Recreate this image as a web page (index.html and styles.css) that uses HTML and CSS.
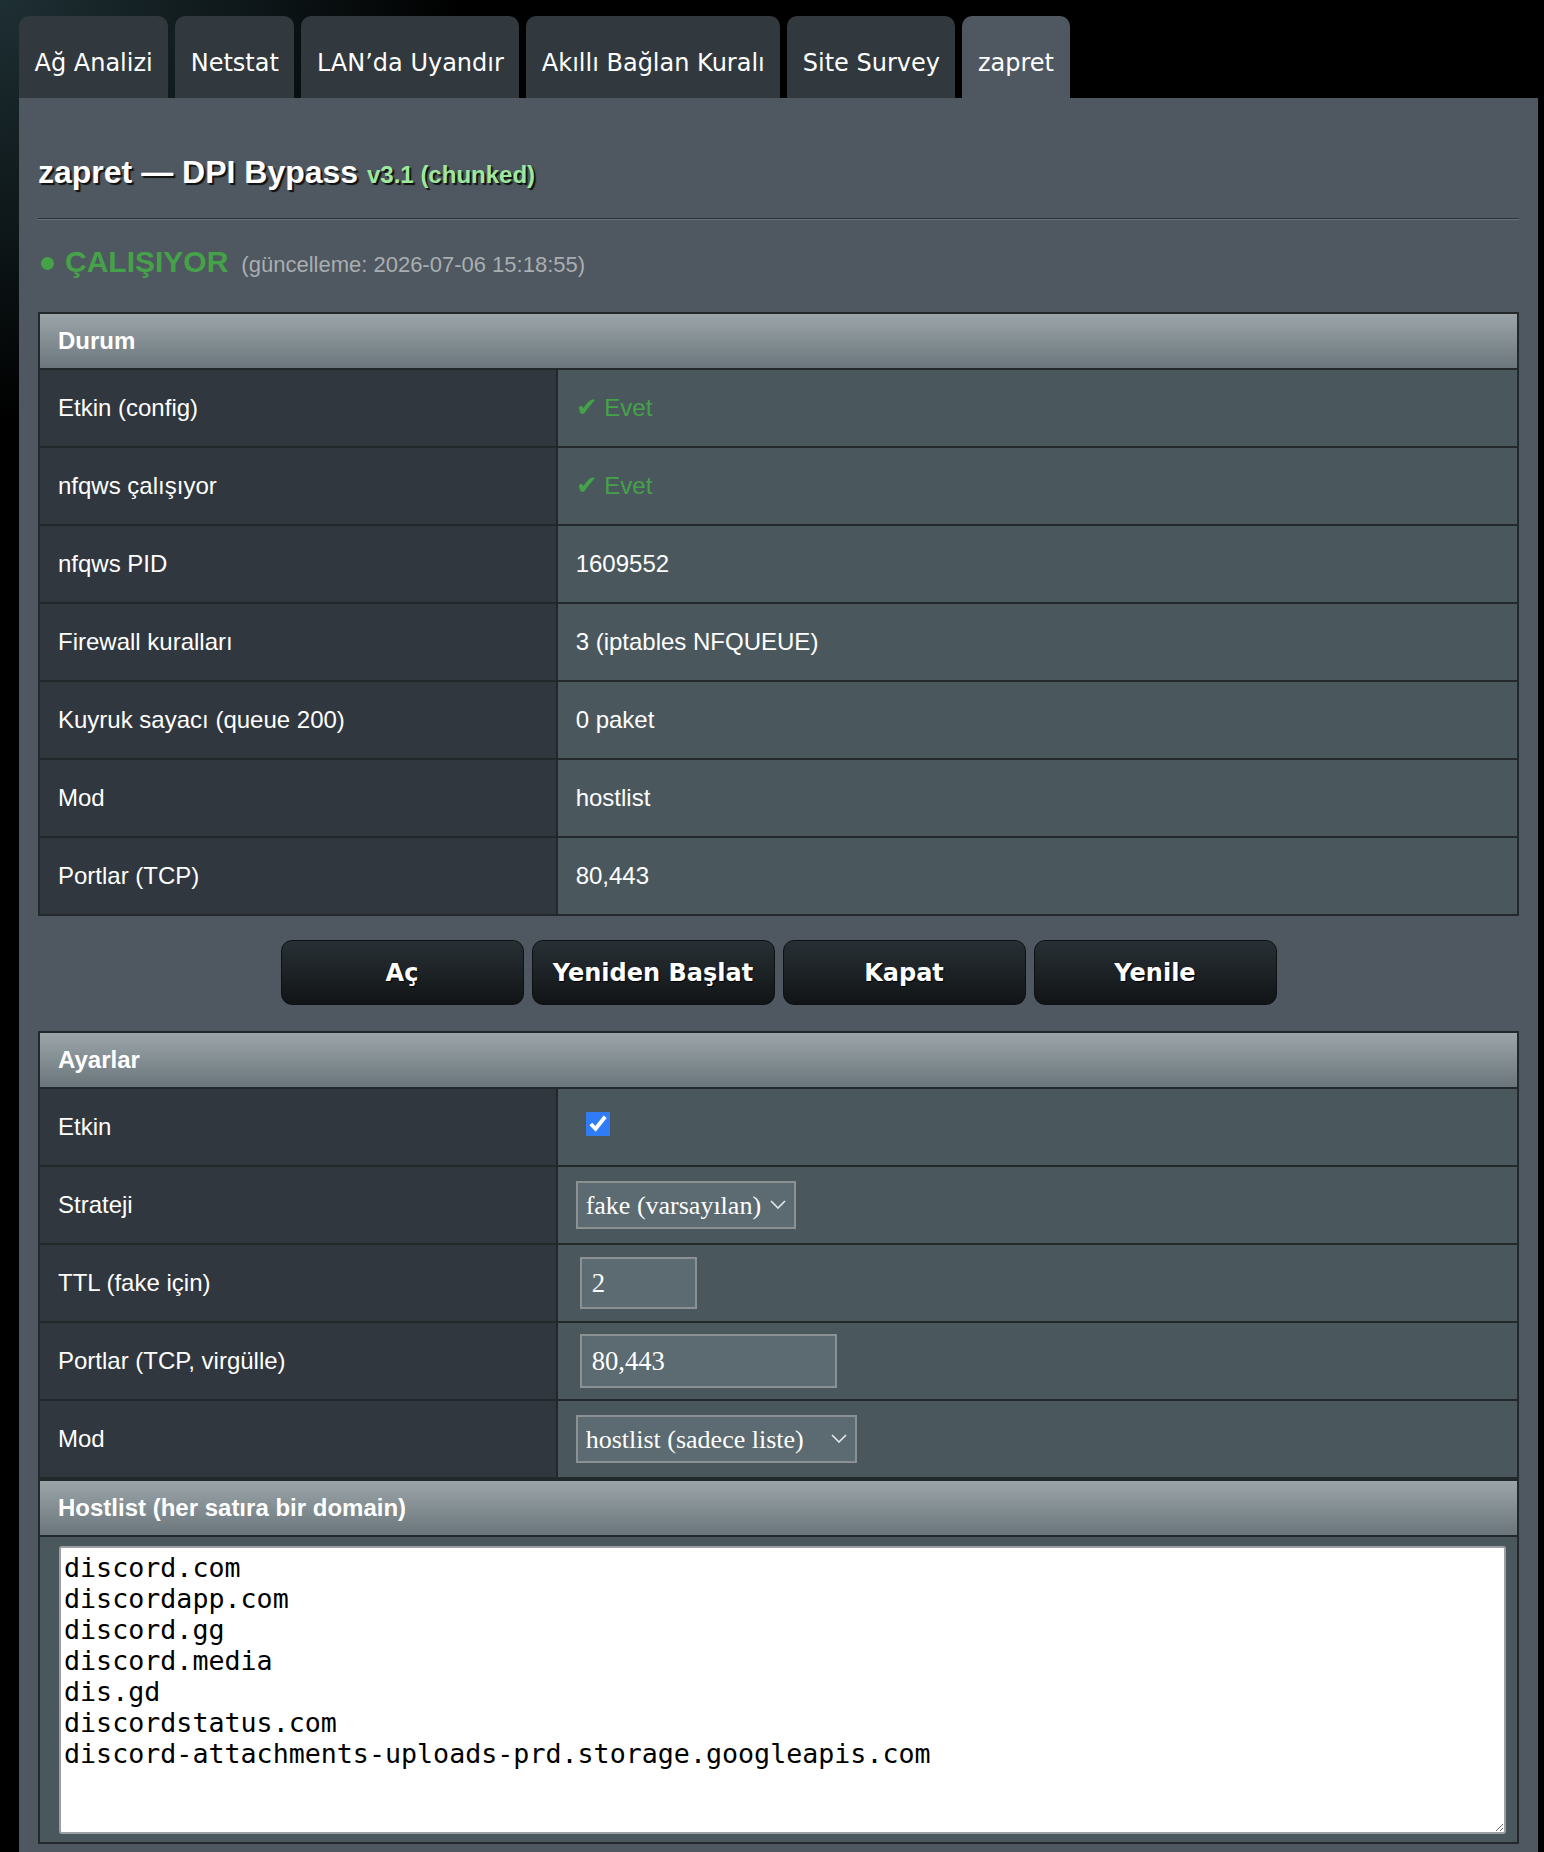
FILE: index.html
```html
<!DOCTYPE html>
<html lang="tr">
<head>
<meta charset="utf-8">
<title>zapret — DPI Bypass</title>
<link rel="stylesheet" href="styles.css">
</head>
<body>

<ul class="tabs">
  <li><a href="#">Ağ Analizi</a></li>
  <li><a href="#">Netstat</a></li>
  <li><a href="#">LAN’da Uyandır</a></li>
  <li><a href="#">Akıllı Bağlan Kuralı</a></li>
  <li><a href="#">Site Survey</a></li>
  <li class="active"><a href="#">zapret</a></li>
</ul>

<div class="panel">
  <h1>zapret — DPI Bypass <span class="ver">v3.1 (chunked)</span></h1>
  <hr>

  <div class="status">
    <span class="dot"></span><b>ÇALIŞIYOR</b><span class="updated">(güncelleme: 2026-07-06 15:18:55)</span>
  </div>

  <!-- servis durumu -->
  <table class="box">
    <colgroup><col class="col-label"><col></colgroup>
    <thead><tr><th colspan="2">Durum</th></tr></thead>
    <tbody>
      <tr><td class="label">Etkin (config)</td><td><span class="ok"><i>✔</i> Evet</span></td></tr>
      <tr><td class="label">nfqws çalışıyor</td><td><span class="ok"><i>✔</i> Evet</span></td></tr>
      <tr><td class="label">nfqws PID</td><td>1609552</td></tr>
      <tr><td class="label">Firewall kuralları</td><td>3 (iptables NFQUEUE)</td></tr>
      <tr><td class="label">Kuyruk sayacı (queue 200)</td><td>0 paket</td></tr>
      <tr><td class="label">Mod</td><td>hostlist</td></tr>
      <tr><td class="label">Portlar (TCP)</td><td>80,443</td></tr>
    </tbody>
  </table>

  <div class="actions">
    <button type="button">Aç</button>
    <button type="button">Yeniden Başlat</button>
    <button type="button">Kapat</button>
    <button type="button">Yenile</button>
  </div>

  <!-- ayarlar formu -->
  <table class="box">
    <colgroup><col class="col-label"><col></colgroup>
    <thead><tr><th colspan="2">Ayarlar</th></tr></thead>
    <tbody>
      <tr><td class="label">Etkin</td><td><input type="checkbox" class="check" checked></td></tr>
      <tr>
        <td class="label">Strateji</td>
        <td>
          <span class="pick pick-strategy">
            <select>
              <option>fake (varsayılan)</option>
              <option>split</option>
              <option>disorder</option>
            </select>
            <svg width="16" height="9" viewBox="0 0 16 9"><path d="M1 1l7 7 7-7" fill="none" stroke="#e4e8ea" stroke-width="1.6"/></svg>
          </span>
        </td>
      </tr>
      <tr><td class="label">TTL (fake için)</td><td><input type="text" class="field field-ttl" value="2"></td></tr>
      <tr><td class="label">Portlar (TCP, virgülle)</td><td><input type="text" class="field field-ports" value="80,443"></td></tr>
      <tr>
        <td class="label">Mod</td>
        <td>
          <span class="pick pick-mode">
            <select>
              <option>hostlist (sadece liste)</option>
              <option>all (tüm trafik)</option>
            </select>
            <svg width="16" height="9" viewBox="0 0 16 9"><path d="M1 1l7 7 7-7" fill="none" stroke="#e4e8ea" stroke-width="1.6"/></svg>
          </span>
        </td>
      </tr>
    </tbody>
  </table>

  <table class="box">
    <thead><tr><th>Hostlist (her satıra bir domain)</th></tr></thead>
    <tbody>
      <tr><td class="list-cell"><textarea class="hostlist" spellcheck="false">discord.com
discordapp.com
discord.gg
discord.media
dis.gd
discordstatus.com
discord-attachments-uploads-prd.storage.googleapis.com</textarea></td></tr>
    </tbody>
  </table>
</div>

</body>
</html>
```

FILE: styles.css
```css
body {
  margin: 0;
  background: #000 radial-gradient(ellipse 460px 420px at 0 0, #1e2f33 0%, #0c1416 60%, #000 100%) no-repeat;
  color: #fff;
  font-family: "Liberation Sans", Arial, sans-serif;
}

/* sekmeler */
.tabs {
  list-style: none;
  margin: 0;
  padding: 16px 0 0 19px;
  display: flex;
  gap: 7px;
}
.tabs a {
  display: block;
  height: 70px;
  padding: 12px 15.5px 0;
  line-height: 70px;
  background: #31383e;
  border-radius: 10px 10px 0 0;
  color: #fff;
  text-decoration: none;
  font-family: "DejaVu Sans", Verdana, sans-serif;
  font-size: 24px;
}
.tabs .active a {
  background: #4f5860;
}

.panel {
  margin-left: 19px;
  width: 1519px;
  box-sizing: border-box;
  background: #4f5860;
  padding: 54px 19px 40px;
}

h1 {
  margin: 0;
  font-size: 32px;
  line-height: 40px;
  text-shadow: 2px 2px 1px #111;
}
h1 .ver {
  font-size: 24px;
  color: #9ee89e;
}

hr {
  margin: 23px 0 0;
  height: 0;
  border: 0;
  border-top: 1px solid #2c3136;
  border-bottom: 1px solid #69727a;
}

.status {
  margin-top: 24px;
  line-height: 36px;
  height: 36px;
}
.status .dot {
  display: inline-block;
  width: 13px;
  height: 13px;
  border-radius: 50%;
  background: #45a249;
  margin: 0 11px 2px 3px;
}
.status b {
  font-size: 30px;
  color: #45a249;
}
.status .updated {
  font-size: 22px;
  color: #a9aeb1;
  margin-left: 13px;
}

/* tablolar */
.box {
  width: 100%;
  border-collapse: collapse;
  table-layout: fixed;
}
.status + .box {
  margin-top: 32px;
}
.col-label {
  width: 35%;
}
.box th,
.box td {
  border: 2px solid #23282b;
  padding: 0 18px;
  font-size: 24px;
}
.box th {
  height: 54px;
  text-align: left;
  background: linear-gradient(#9ba5a9, #6b767c);
}
.box td {
  height: 76px;
  background: #4a585e;
}
.box td.label {
  background: #30373e;
}
.ok {
  color: #45a249;
}
.ok i {
  font-style: normal;
  font-size: 26px;
  line-height: 1;
}

.actions {
  display: flex;
  justify-content: center;
  gap: 8px;
  margin: 24px 0 26px;
}
.actions button {
  width: 243px;
  height: 65px;
  border: 1px solid #0e1113;
  border-radius: 11px;
  background: linear-gradient(#283035, #111416);
  color: #fff;
  font-family: "DejaVu Sans", Verdana, sans-serif;
  font-weight: bold;
  font-size: 24px;
  text-shadow: 1px 1px 1px #000;
}

/* form alanları */
.check {
  width: 24px;
  height: 24px;
  margin: 0 0 7px 10px;
  vertical-align: middle;
  accent-color: #2f7cf6;
}
.pick {
  position: relative;
  display: inline-block;
}
.pick select {
  appearance: none;
  -webkit-appearance: none;
  height: 48px;
  padding: 0 0 0 8px;
  border: 2px solid #8b9093;
  border-radius: 0;
  background: #5b6b71;
  color: #fff;
  font-family: "Liberation Serif", "Times New Roman", serif;
  font-size: 26px;
}
.pick svg {
  position: absolute;
  right: 10px;
  top: 50%;
  margin-top: -5px;
  pointer-events: none;
}
.pick-strategy select {
  width: 220px;
}
.pick-mode select {
  width: 281px;
}
.field {
  box-sizing: border-box;
  height: 52px;
  margin-left: 4px;
  padding: 0 10px;
  border: 2px solid #8b9093;
  background: #5b6b71;
  color: #fff;
  font-family: "Liberation Serif", "Times New Roman", serif;
  font-size: 26.67px;
}
.field-ttl {
  width: 117px;
}
.field-ports {
  width: 257px;
  height: 54px;
}

.box td.list-cell {
  height: auto;
  padding: 9px 11px 8px 19px;
}
.hostlist {
  display: block;
  box-sizing: border-box;
  width: 100%;
  height: 288px;
  padding: 4px 3px;
  border: 2px solid #9aa0a3;
  border-radius: 3px;
  background: #fff;
  color: #000;
  font-family: "DejaVu Sans Mono", Menlo, monospace;
  font-size: 26.67px;
}
```
